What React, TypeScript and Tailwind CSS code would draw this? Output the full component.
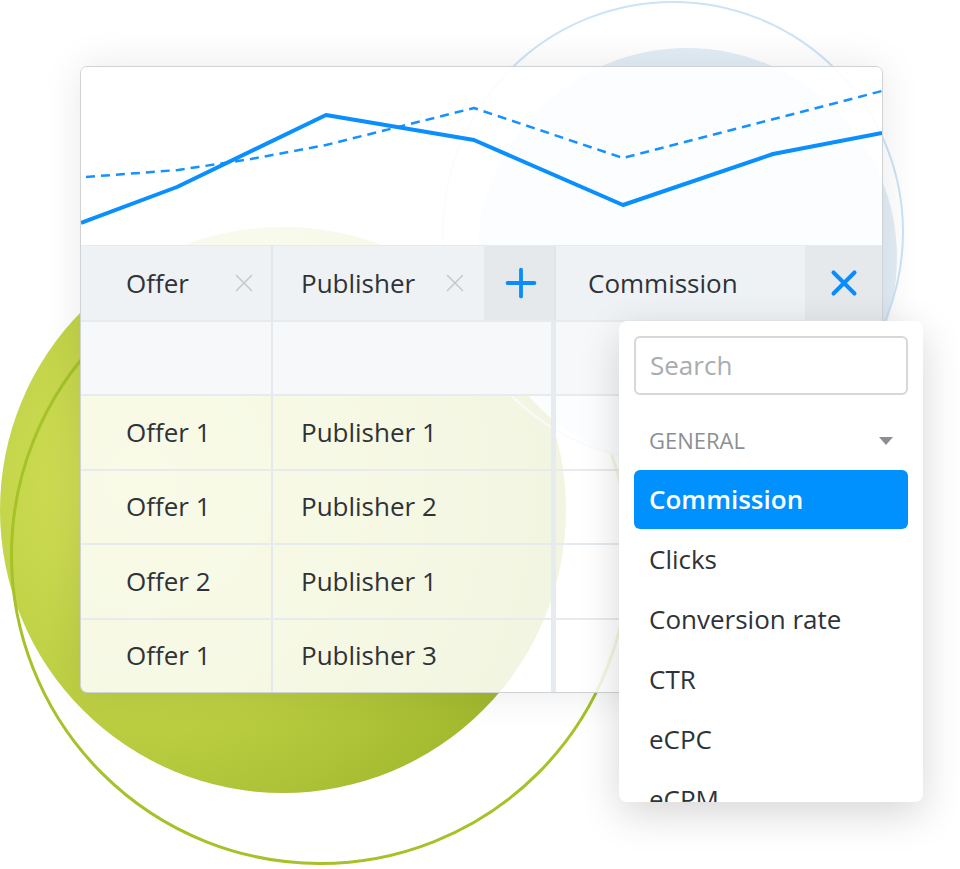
import { Plus, X } from 'lucide-react'

const ROWS = [
  ['Offer 1', 'Publisher 1'],
  ['Offer 1', 'Publisher 2'],
  ['Offer 2', 'Publisher 1'],
  ['Offer 1', 'Publisher 3'],
]

const METRICS = ['Clicks', 'Conversion rate', 'CTR', 'eCPC', 'eCPM']

/* ------------------------------------------------------------------ */
/*  Chart                                                             */
/* ------------------------------------------------------------------ */

function Chart() {
  return (
    <div className="h-[179px] bg-white/[0.9] border-b border-[#e6ebef]">
      <svg viewBox="0 0 801 179" width="801" height="179" className="block">
        <polyline
          points="5,110 97,103 170,92 245,78 393,41 542,91 801,24"
          fill="none"
          stroke="#1592ff"
          strokeWidth="2.5"
          strokeDasharray="9 6"
          strokeLinejoin="round"
        />
        <polyline
          points="0,156 96,120 245,48 393,73 542,138 692,87 801,66"
          fill="none"
          stroke="#0a8fff"
          strokeWidth="4"
          strokeLinejoin="round"
        />
      </svg>
    </div>
  )
}

/* ------------------------------------------------------------------ */
/*  Table                                                             */
/* ------------------------------------------------------------------ */

function HeaderRow() {
  return (
    <div className="flex h-[74px] bg-[#eef2f5] text-[26px] text-[#2f3338]">
      <div className="w-[192px] flex items-center justify-between pl-[45px] pr-[12px] border-r-2 border-[#e2e7eb]">
        <span>Offer</span>
        <X size={30} strokeWidth={1.2} className="text-[#c6c9cc]" />
      </div>
      <div className="w-[211px] flex items-center justify-between pl-[28px] pr-[14px]">
        <span>Publisher</span>
        <X size={30} strokeWidth={1.2} className="text-[#c6c9cc]" />
      </div>
      <div className="w-[70px] flex items-center justify-center pl-[3px] bg-[#e5e9ec]">
        <Plus size={46} strokeWidth={2} className="text-[#0a8cff]" />
      </div>
      <div className="w-[2px] bg-[#e0e5e9]" />
      <div className="w-[249px] flex items-center pl-[32px]">Commission</div>
      <div className="flex-1 flex items-center justify-center bg-[#e5e9ec]">
        <X size={42} strokeWidth={2.3} className="text-[#0a8cff]" />
      </div>
    </div>
  )
}

function BodyRow({ cells, filter }: { cells: string[]; filter?: boolean }) {
  const bg = filter ? 'bg-[#f6f8fa] h-[74px]' : 'bg-white/[0.86] h-[74.5px]'
  return (
    <div className={`flex text-[26px] text-[#2f3338] border-t-2 border-[#e6ebef] ${bg}`}>
      <div className="w-[192px] flex items-center pl-[45px] border-r-2 border-[#e4e9ed]">{cells[0]}</div>
      <div className="w-[278px] flex items-center pl-[28px]">{cells[1]}</div>
      <div className="w-[5px] bg-[#e6ebef]" />
      <div className="flex-1" />
    </div>
  )
}

/* ------------------------------------------------------------------ */
/*  Dropdown                                                          */
/* ------------------------------------------------------------------ */

function MetricDropdown() {
  return (
    <div className="absolute left-[619px] top-[321px] w-[304px] h-[481px] overflow-hidden rounded-lg bg-white shadow-[0_12px_40px_rgba(0,0,0,0.16)] p-[15px] text-[26px] text-[#2f3338]">
      <div className="h-[59px] flex items-center px-[14px] rounded-md border-2 border-[#d5d7d9] text-[#a9acaf]">
        Search
      </div>
      <div className="mt-[16px] h-[59px] flex items-center justify-between pl-[15px] pr-[15px] text-[22px] text-[#8b8f93]">
        <span>GENERAL</span>
        <svg width="14" height="8" viewBox="0 0 14 8">
          <path d="M0 0 L14 0 L7 8 Z" fill="#8b8f93" />
        </svg>
      </div>
      <div className="h-[59px] flex items-center pl-[15px] rounded-md bg-[#0091ff] text-white font-semibold">
        Commission
      </div>
      {METRICS.map((m) => (
        <div key={m} className="h-[60px] flex items-center pl-[15px]">
          {m}
        </div>
      ))}
    </div>
  )
}

/* ------------------------------------------------------------------ */
/*  Page                                                              */
/* ------------------------------------------------------------------ */

export default function App() {
  return (
    <div className="relative w-[960px] h-[869px] overflow-hidden bg-white font-['Open_Sans',sans-serif]">
      {/* Background circles */}
      <div className="absolute left-0 top-[227px] w-[566px] h-[566px] rounded-full bg-[radial-gradient(circle_at_25%_45%,#d3e05a_0%,#bccf42_45%,#9db42a_85%)]" />
      <div className="absolute left-[10px] top-[245px] w-[620px] h-[620px] rounded-full border-[3px] border-[#a5c229]" />
      <div className="absolute left-[477px] top-[48px] w-[420px] h-[420px] rounded-full bg-[#e2edf6]" />
      <div className="absolute left-[442px] top-[1px] w-[462px] h-[462px] rounded-full border-2 border-[#cbe3f9]" />

      {/* Card */}
      <div className="relative ml-[80px] mt-[66px] w-[803px] rounded-[7px] border border-[#cfd3d6] overflow-hidden shadow-[0_0_40px_rgba(0,0,0,0.09)]">
        <Chart />
        <HeaderRow />
        <BodyRow cells={['', '']} filter />
        {ROWS.map((r, i) => (
          <BodyRow key={i} cells={r} />
        ))}
      </div>

      <MetricDropdown />
    </div>
  )
}
